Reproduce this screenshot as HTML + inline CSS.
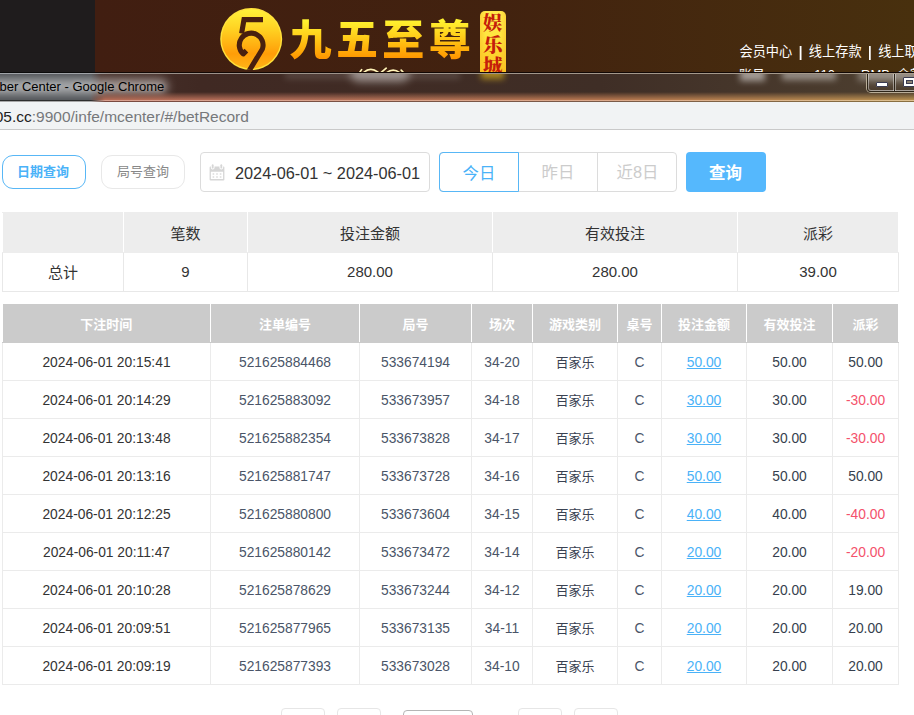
<!DOCTYPE html>
<html lang="zh-CN">
<head>
<meta charset="utf-8">
<title>Member Center</title>
<style>
*{box-sizing:border-box;margin:0;padding:0}
html,body{width:914px;height:715px;overflow:hidden;background:#fff}
body{position:relative;font-family:"Liberation Sans","Noto Sans CJK SC",sans-serif;color:#333;font-size:14px}
.abs{position:absolute}
/* ---------- background site header ---------- */
#site{left:0;top:0;width:914px;height:102px;background:linear-gradient(90deg,#411e11 95px,#42220f 500px,#48300e 914px)}
#site .dark{left:0;top:0;width:95px;height:102px;background:#1f1c1d}
#nav{left:739.5px;top:43px;color:#fff;font-size:13.2px;white-space:nowrap;line-height:18px}
#nav i{font-style:normal;display:inline-block;width:16.6px;text-align:center;font-weight:700;transform:scaleY(1.15)}
#nav2{left:739px;top:66px;color:#fff;font-size:13px;white-space:nowrap;line-height:18px}
#brand{left:289.5px;top:10.5px;font-family:"Liberation Sans","Noto Sans CJK SC",sans-serif;font-weight:900;font-size:42px;line-height:60px;letter-spacing:4.4px;white-space:nowrap;
 background:linear-gradient(180deg,#fff230 16%,#ffd21c 40%,#ffb40c 60%,#ff9400 80%);-webkit-background-clip:text;background-clip:text;color:transparent}
#badge{left:480px;top:10.5px;width:25.5px;height:70px;border-radius:5px;background:linear-gradient(90deg,rgba(250,190,40,.55),rgba(255,255,255,0) 22%,rgba(255,255,255,0) 78%,rgba(250,190,40,.55)),linear-gradient(180deg,#ffe94a,#ffe640 35%,#fbc41f 85%);color:#c51d0b;
 font-family:"Liberation Serif","Noto Serif CJK SC",serif;font-weight:900;font-size:19.5px;line-height:21.5px;text-align:center;padding-top:2.5px}
/* ---------- window chrome ---------- */
#glass{left:0;top:72px;width:914px;height:30px;overflow:hidden;
 background:linear-gradient(90deg,#4f5256 0,#4f5256 91px,#46302a 101px,#402923 200px,#3f2e26 600px,#4e4030 914px)}
#glass .ln{left:0;width:914px;height:1px}
#glow{left:0;top:20px;width:914px;height:8px;background:linear-gradient(90deg,rgba(79,82,86,0) 0,rgba(79,82,86,0) 89px,#b86e58 105px,#b4705a 300px,#b87850 600px,#b89050 914px);
 -webkit-mask-image:linear-gradient(180deg,transparent,#000);mask-image:linear-gradient(180deg,transparent,#000)}
#tglow{left:-60px;top:7px;width:228px;height:15px;border-radius:8px;background:#fff;opacity:.5;filter:blur(5px)}
#ctl{left:866px;top:74px;width:60px;height:19px;border:1px solid #b9ad98;border-top:none;border-radius:0 0 0 5px}
#ctl .d{position:absolute;left:0;top:0;width:60px;height:18px;border:1px solid #2c2418;border-top:none;border-radius:0 0 0 4px}
#ctl .l{position:absolute;left:0;top:0;width:60px;height:17px;border:1px solid rgba(255,255,255,.42);border-top:none;border-radius:0 0 0 3px;background:linear-gradient(180deg,rgba(255,255,255,.16),rgba(255,255,255,.05) 55%,rgba(255,255,255,0))}
#ctl i{position:absolute;display:block}
#title{left:-0.5px;top:78px;font-size:13px;line-height:18px;color:#000;white-space:nowrap;text-shadow:0 0 5px rgba(255,255,255,.35)}
#addr{left:0;top:102px;width:914px;height:28px;background:#f1f3f4;border-bottom:1px solid #c9c9c9}
#url{left:-5.3px;top:107px;font-size:15.5px;line-height:20px;color:#76787b;white-space:nowrap}
#url b{font-weight:400;color:#222}
/* ---------- filters ---------- */
.pill{top:155px;height:34px;border-radius:11px;border:1px solid #e8e8e8;font-size:13px;line-height:32px;text-align:center;color:#888;background:#fff}
.pill.on{border:1.5px solid #58b7f6;color:#4ab2f8;font-weight:700;line-height:31px}
#date{left:200px;top:152px;width:230px;height:40px;border:1px solid #dcdcdc;border-radius:4px}
#date span{position:absolute;left:34px;top:1px;line-height:38px;font-size:16.3px;color:#333;white-space:nowrap}
#grp{left:439px;top:152px;width:238px;height:40px;border:1px solid #dcdcdc;border-radius:4px}
#grp div{position:absolute;top:-1px;height:40px;line-height:41.5px;text-align:center;font-size:16.4px;color:#ccc}
#query{left:686px;top:152px;width:80px;height:40px;border-radius:4px;background:#55b8fd;color:#fff;font-weight:700;font-size:16.5px;line-height:43px;text-align:center;padding-right:1px}
/* ---------- tables ---------- */
table{border-collapse:collapse;table-layout:fixed;position:absolute}
#sum{left:2px;top:212px;width:896px}
#sum td{height:39.5px;text-align:center;font-size:15px;color:#333;border:1px solid #e8e8e8}
#sum tr.h td{background:#ededed;border-color:#ededed #fff #ededed #fff}
#rec{left:2px;top:304px;width:896px}
#rec th{height:38px;padding-top:2px;background:#cbcbcb;color:#fff;font-size:13px;font-weight:700;border-right:1px solid #fff;border-bottom:1px solid #cbcbcb;text-align:center}
#rec td{height:38px;padding-top:2px;text-align:center;font-size:13.8px;color:#333;border:1px solid #ebebeb}
#rec td.n{color:#4a5568}
#rec td.g{font-size:13px;color:#3a4252;padding-top:1px;padding-bottom:1px}
#rec td.s{color:#363f4e}
#rec td a{color:#4ab2f8;text-decoration:underline}
#rec td.r{color:#f4516c}
.pg{top:708px;height:30px;border:1px solid #e6e6e6;border-radius:4px;background:#fff}
</style>
</head>
<body>
<!-- site header behind the popup window -->
<div id="site" class="abs"><div class="dark abs"></div></div>
<svg class="abs" style="left:218px;top:6px" width="66" height="66" viewBox="218 6 66 66">
 <defs>
  <linearGradient id="lg" x1="0" y1="0" x2="0" y2="1"><stop offset="0" stop-color="#fff23a"/><stop offset=".35" stop-color="#ffd021"/><stop offset=".75" stop-color="#ff9d08"/><stop offset="1" stop-color="#ffb418"/></linearGradient>
  <clipPath id="lc"><circle cx="251.2" cy="39" r="31"/></clipPath>
 </defs>
 <circle cx="251.2" cy="39" r="31" fill="#ffe23c"/>
 <circle cx="251.2" cy="39" r="29.6" fill="url(#lg)"/>
 <g clip-path="url(#lc)" fill="none" stroke="#49200f" stroke-width="5.1" stroke-linejoin="miter">
  <path d="M263,19.6 H244 L241.6,33.5"/>
  <path d="M246.4,50.6 L243.2,53.9 A11.9,11.9 0 1 1 262.4,49 L248.4,72" stroke-linejoin="round"/>
 </g>
</svg>
<svg class="abs" style="left:356px;top:64px" width="52" height="8" viewBox="356 64 52 8" fill="none" stroke="#fff4b8" stroke-width="1.7" stroke-linecap="round">
 <path d="M360,72 L361.6,69.6"/><path d="M363.5,72.6 Q370.5,66.6 378,72.2"/><path d="M381.2,72.4 L386.2,68.2"/><path d="M386.5,72.8 Q393,67.4 399.6,72.6"/><path d="M401.2,70.2 L403,72"/>
</svg>
<div id="brand" class="abs">九五至尊</div>
<div id="badge" class="abs">娱<br>乐<br>城</div>
<div id="nav" class="abs">会员中心<i>|</i>线上存款<i>|</i>线上取款</div>
<div id="nav2" class="abs">账号<span style="position:absolute;left:75.2px">110</span><span style="position:absolute;left:122px">RMB</span><span style="position:absolute;left:158px">余额</span></div>

<!-- window chrome -->
<div id="glass" class="abs">
 <div class="abs" style="left:350px;top:-8px;width:60px;height:18px;border-radius:9px;background:#fff;opacity:.42;filter:blur(4px)"></div>
 <div class="abs" style="left:481px;top:-6px;width:23px;height:13px;background:#ffd21f;opacity:.55;filter:blur(3px)"></div>
 <div class="abs" style="left:740px;top:-3px;width:25px;height:12px;background:#fff;opacity:.5;filter:blur(3px)"></div>
 <div class="abs" style="left:782px;top:-2px;width:54px;height:10px;background:#fff;opacity:.42;filter:blur(3px)"></div>
 <div class="abs" style="left:858px;top:-3px;width:60px;height:12px;background:#fff;opacity:.32;filter:blur(3px)"></div>
 <div class="abs" style="left:285px;top:0;width:175px;height:7px;background:#fff;opacity:.13;filter:blur(3px)"></div>
 <div id="tglow" class="abs"></div>
 <div id="glow" class="abs"></div>
 <div class="abs ln" style="top:0;background:linear-gradient(90deg,#0b0b0b 95px,#120805 95px)"></div>
 <div class="abs ln" style="top:1px;background:linear-gradient(90deg,#a0a3a8 90px,#9a908a 110px,#a89c8c 914px)"></div>
 <div class="abs ln" style="top:28px;background:linear-gradient(90deg,#2e2e2e 91px,#d8a090 105px,#dba88a 600px,#dcc090 914px)"></div>
 <div class="abs ln" style="top:29px;background:linear-gradient(90deg,#a8a8a8 91px,#7a4a40 105px,#7a5a48 600px,#8a7040 914px)"></div>
</div>
<div id="ctl" class="abs"><div class="d"><div class="l"></div></div>
 <i style="left:27px;top:0;width:1px;height:17px;background:#2c2418;box-shadow:-1px 0 0 rgba(255,255,255,.42),1px 0 0 rgba(255,255,255,.42)"></i>
 <i style="left:8.5px;top:8px;width:12px;height:5px;background:#fff;border:1px solid #3b3c52;border-radius:1px"></i>
 <i style="left:35.5px;top:3px;width:14px;height:10px;background:#fff;border:1px solid #3b3c52;border-radius:1px"></i>
 <i style="left:38.5px;top:6px;width:7px;height:4px;background:#8a8172;border:1px solid #3b3c52"></i>
</div>
<div id="title" class="abs">ber Center - Google Chrome</div>
<div id="addr" class="abs"></div>
<div id="url" class="abs"><b>05.cc</b>:9900/infe/mcenter/#/betRecord</div>

<!-- filters -->
<div class="abs pill on" style="left:2px;width:84px;padding-right:2px">日期查询</div>
<div class="abs pill" style="left:101px;width:84px">局号查询</div>
<div id="date" class="abs"><svg style="position:absolute;left:8px;top:11px" width="16" height="17" viewBox="0 0 16 17">
 <path d="M0.6,3.6 Q0.6,2.6 1.6,2.6 H14.4 Q15.4,2.6 15.4,3.6 V15.4 Q15.4,16.4 14.4,16.4 H1.6 Q0.6,16.4 0.6,15.4 Z M1.9,7.8 V15 H14.1 V7.8 Z" fill="#d6d6d6" fill-rule="evenodd"/>
 <rect x="1.9" y="0.2" width="3.6" height="5.4" rx="1.8" fill="#fff"/><rect x="10.5" y="0.2" width="3.6" height="5.4" rx="1.8" fill="#fff"/>
 <rect x="2.8" y="0.3" width="1.8" height="4.3" rx=".9" fill="#d6d6d6"/><rect x="11.4" y="0.3" width="1.8" height="4.3" rx=".9" fill="#d6d6d6"/>
 <g fill="#dedede"><rect x="3.6" y="9.2" width="1.6" height="1.6"/><rect x="7.2" y="9.2" width="1.6" height="1.6"/><rect x="10.8" y="9.2" width="1.6" height="1.6"/><rect x="3.6" y="12.2" width="1.6" height="1.6"/><rect x="7.2" y="12.2" width="1.6" height="1.6"/><rect x="10.8" y="12.2" width="1.6" height="1.6"/></g>
</svg><span>2024-06-01 ~ 2024-06-01</span></div>
<div id="grp" class="abs">
 <div style="left:-1px;width:80px;border:1px solid #58b7f6;border-radius:4px 0 0 4px;color:#4ab2f8">今日</div>
 <div style="left:79px;width:79px;border-right:1px solid #dcdcdc">昨日</div>
 <div style="left:158px;width:79px">近8日</div>
</div>
<div id="query" class="abs">查询</div>

<!-- summary -->
<table id="sum">
<colgroup><col style="width:121px"><col style="width:124px"><col style="width:245px"><col style="width:245px"><col style="width:161px"></colgroup>
<tr class="h"><td></td><td>笔数</td><td>投注金额</td><td>有效投注</td><td>派彩</td></tr>
<tr><td>总计</td><td>9</td><td>280.00</td><td>280.00</td><td>39.00</td></tr>
</table>

<!-- records -->
<table id="rec">
<colgroup><col style="width:208px"><col style="width:149px"><col style="width:112px"><col style="width:61px"><col style="width:85px"><col style="width:44px"><col style="width:85px"><col style="width:86px"><col style="width:66px"></colgroup>
<tr><th>下注时间</th><th>注单编号</th><th>局号</th><th>场次</th><th>游戏类别</th><th>桌号</th><th>投注金额</th><th>有效投注</th><th>派彩</th></tr>
<tr><td>2024-06-01 20:15:41</td><td class="n">521625884468</td><td class="n">533674194</td><td class="n">34-20</td><td class="g">百家乐</td><td class="n">C</td><td><a>50.00</a></td><td class="s">50.00</td><td class="s">50.00</td></tr>
<tr><td>2024-06-01 20:14:29</td><td class="n">521625883092</td><td class="n">533673957</td><td class="n">34-18</td><td class="g">百家乐</td><td class="n">C</td><td><a>30.00</a></td><td class="s">30.00</td><td class="r">-30.00</td></tr>
<tr><td>2024-06-01 20:13:48</td><td class="n">521625882354</td><td class="n">533673828</td><td class="n">34-17</td><td class="g">百家乐</td><td class="n">C</td><td><a>30.00</a></td><td class="s">30.00</td><td class="r">-30.00</td></tr>
<tr><td>2024-06-01 20:13:16</td><td class="n">521625881747</td><td class="n">533673728</td><td class="n">34-16</td><td class="g">百家乐</td><td class="n">C</td><td><a>50.00</a></td><td class="s">50.00</td><td class="s">50.00</td></tr>
<tr><td>2024-06-01 20:12:25</td><td class="n">521625880800</td><td class="n">533673604</td><td class="n">34-15</td><td class="g">百家乐</td><td class="n">C</td><td><a>40.00</a></td><td class="s">40.00</td><td class="r">-40.00</td></tr>
<tr><td>2024-06-01 20:11:47</td><td class="n">521625880142</td><td class="n">533673472</td><td class="n">34-14</td><td class="g">百家乐</td><td class="n">C</td><td><a>20.00</a></td><td class="s">20.00</td><td class="r">-20.00</td></tr>
<tr><td>2024-06-01 20:10:28</td><td class="n">521625878629</td><td class="n">533673244</td><td class="n">34-12</td><td class="g">百家乐</td><td class="n">C</td><td><a>20.00</a></td><td class="s">20.00</td><td class="s">19.00</td></tr>
<tr><td>2024-06-01 20:09:51</td><td class="n">521625877965</td><td class="n">533673135</td><td class="n">34-11</td><td class="g">百家乐</td><td class="n">C</td><td><a>20.00</a></td><td class="s">20.00</td><td class="s">20.00</td></tr>
<tr><td>2024-06-01 20:09:19</td><td class="n">521625877393</td><td class="n">533673028</td><td class="n">34-10</td><td class="g">百家乐</td><td class="n">C</td><td><a>20.00</a></td><td class="s">20.00</td><td class="s">20.00</td></tr>
</table>

<!-- pagination (peeking) -->
<div class="abs pg" style="left:281px;width:44px"></div>
<div class="abs pg" style="left:337px;width:44px"></div>
<div class="abs pg" style="left:403px;top:710px;width:70px;border-color:#b5b5b5"></div>
<div class="abs pg" style="left:518px;width:44px"></div>
<div class="abs pg" style="left:574px;width:44px"></div>
</body>
</html>
